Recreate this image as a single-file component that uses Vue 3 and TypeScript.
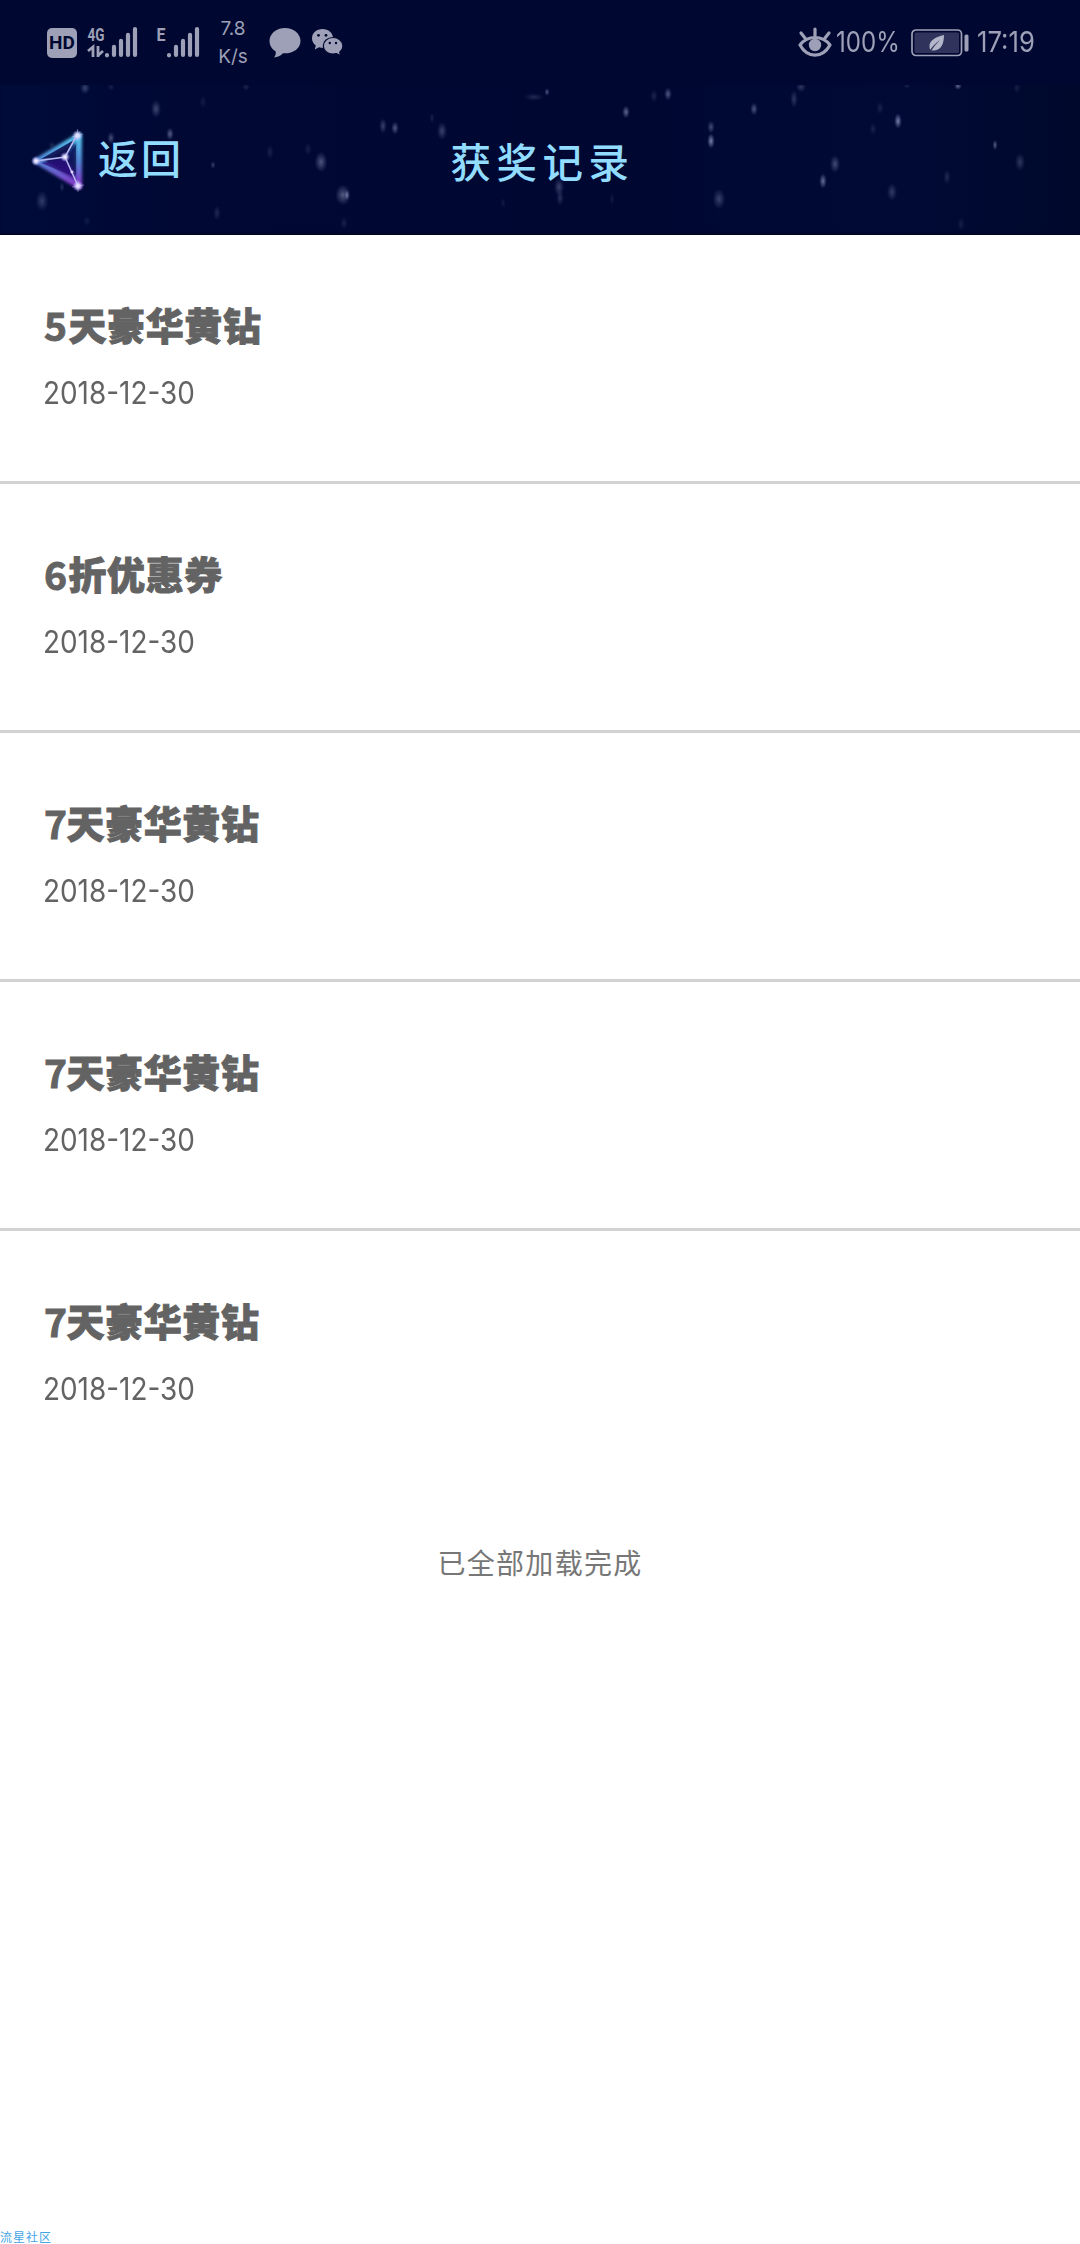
<script setup lang="ts">
interface Prize {
  name: string
  date: string
}

const prizes: Prize[] = [
  { name: '5天豪华黄钻', date: '2018-12-30' },
  { name: '6折优惠券', date: '2018-12-30' },
  { name: '7天豪华黄钻', date: '2018-12-30' },
  { name: '7天豪华黄钻', date: '2018-12-30' },
  { name: '7天豪华黄钻', date: '2018-12-30' },
]

// Star field of the header: x, y, rx, ry, opacity
const stars: number[][] = [
  [85, 88, 4, 5, 0.3], [111, 87, 3, 3, 0.12], [246, 87, 3, 3, 0.15], [156, 109, 4, 7, 0.32],
  [203, 102, 3, 5, 0.1], [170, 134, 3, 5, 0.45], [111, 138, 3, 5, 0.35], [213, 165, 2, 3, 0.3],
  [42, 201, 5, 8, 0.26], [62, 187, 2, 4, 0.2], [321, 162, 5, 8, 0.4], [343, 195, 6, 8, 0.42],
  [347, 195, 2, 4, 0.5], [217, 213, 3, 6, 0.17], [270, 152, 3, 6, 0.13], [308, 149, 3, 5, 0.12],
  [344, 223, 3, 5, 0.13], [87, 221, 3, 4, 0.1], [52, 145, 3, 3, 0.15],
  [383, 126, 3, 6, 0.3], [395, 128, 3, 5, 0.42], [442, 131, 4, 7, 0.3], [432, 118, 2, 4, 0.13],
  [534, 97, 8, 3, 0.17], [547, 92, 2, 3, 0.4], [559, 187, 4, 7, 0.3], [560, 198, 3, 6, 0.22],
  [626, 112, 3, 5, 0.5], [654, 96, 3, 5, 0.15], [668, 94, 3, 5, 0.42], [711, 127, 3, 5, 0.35],
  [711, 141, 3, 6, 0.62], [719, 199, 5, 8, 0.3], [503, 203, 2, 4, 0.1], [612, 199, 2, 5, 0.1],
  [754, 109, 3, 5, 0.4], [794, 99, 3, 7, 0.24], [801, 87, 4, 4, 0.24], [880, 108, 3, 5, 0.13],
  [898, 121, 3, 6, 0.62], [873, 129, 3, 5, 0.12], [835, 164, 4, 7, 0.34], [823, 181, 3, 6, 0.52],
  [892, 192, 4, 7, 0.26], [947, 177, 3, 6, 0.17], [995, 145, 2, 4, 0.45], [1020, 162, 4, 7, 0.24],
  [958, 86, 3, 3, 0.5], [1017, 88, 3, 4, 0.12], [961, 224, 3, 5, 0.12], [907, 86, 3, 2, 0.12],
]
</script>

<template>
  <div class="page">
    <header class="header">
      <svg class="sky" width="1080" height="235" viewBox="0 0 1080 235">
        <defs>
          <radialGradient id="star">
            <stop offset="0" stop-color="#c9cdea" />
            <stop offset="0.45" stop-color="#aab2dc" stop-opacity="0.6" />
            <stop offset="1" stop-color="#8d99d0" stop-opacity="0" />
          </radialGradient>
          <clipPath id="below"><rect y="85" width="1080" height="148" /></clipPath>
        </defs>
        <g clip-path="url(#below)">
          <ellipse
            v-for="(s, i) in stars" :key="i"
            :cx="s[0]" :cy="s[1]" :rx="s[2] * 1.3" :ry="s[3] * 1.3"
            fill="url(#star)" :opacity="s[4]"
          />
        </g>
      </svg>

      <div class="status">
        <div class="hd"><span>HD</span></div>
        <svg class="sig4" width="52" height="34" viewBox="0 0 52 34">
          <text x="0.5" y="14.5" class="net" textLength="17" lengthAdjust="spacingAndGlyphs">4G</text>
          <g stroke="#9da0b6" stroke-width="4.2" stroke-linecap="round">
            <path d="M20 29.2v.1M27 28.9v-8M34 28.9v-14M41 28.9v-20M48 28.9V3" />
          </g>
          <path d="M1 25l5-4v10M11 20v11M11 29.500l5-4.500" fill="none" stroke="#9da0b6" stroke-width="2.8" />
        </svg>
        <svg class="sige" width="45" height="34" viewBox="0 0 45 34">
          <text x="0.5" y="14.5" class="net" textLength="9" lengthAdjust="spacingAndGlyphs">E</text>
          <g stroke="#9da0b6" stroke-width="4.2" stroke-linecap="round">
            <path d="M13 29.2v.1M20 28.9v-8M27 28.9v-14M34 28.9v-20M41 28.9V3" />
          </g>
        </svg>
        <div class="speed"><span>7.8</span><span>K/s</span></div>
        <svg class="bubble" width="32" height="32" viewBox="0 0 32 32">
          <path d="M16 1C7.2 1 .5 6.800.5 14c0 4.600 2.300 8.200 6.200 10.600C7 27.500 6.400 29 5 30.500c3.500-.3 6.600-1.600 9-4.200 9.800.7 17.500-4.600 17.500-12.300C31.500 6.800 24.800 1 16 1z" fill="#9da0b6" />
        </svg>
        <svg class="wechat" width="33" height="30" viewBox="0 0 33 30">
          <path d="M11.500 1C5.500 1 1 5 1 10.300c0 3 1.400 5.400 3.800 7.100L3.700 21.500l4.400-2.300c1.300.4 2.500.5 4 .5 5.600-.3 10-4.200 10-9.400S17.500 1 11.500 1z" fill="#9da0b6" />
          <path d="M22 9.500c-5.500 0-9.700 3.700-9.700 8.300 0 4.700 4.200 8.300 9.700 8.300 1.200 0 2.400-.2 3.500-.5l4.200 2.200-1-3.500c2-1.500 3.200-3.800 3.200-6.400 0-4.700-4.300-8.400-9.900-8.400z" fill="#9da0b6" stroke="#000831" stroke-width="1.200" />
          <g fill="#000831">
            <circle cx="7.500" cy="7.300" r="1.400" /><circle cx="15" cy="7.300" r="1.400" />
            <circle cx="18.800" cy="15" r="1.200" /><circle cx="25" cy="15" r="1.200" />
          </g>
        </svg>
        <div class="grow"></div>
        <svg class="eye" width="34" height="32" viewBox="0 0 34 32">
          <g fill="none" stroke="#9da0b6" stroke-width="3.200" stroke-linecap="round">
            <path d="M2 19C9.500 9 24.500 9 32 19 24.500 32.500 9.500 32.500 2 19z" stroke-linejoin="round" />
            <path d="M17 3v7M3 7l4 5M31 7l-4 5" />
          </g>
          <circle cx="17" cy="19" r="6.200" fill="#9da0b6" />
        </svg>
        <span class="pct">100%</span>
        <svg class="battery" width="59" height="28" viewBox="0 0 59 28">
          <rect x="1" y="1" width="49.500" height="25.500" rx="4" fill="none" stroke="#9da0b6" stroke-width="1.700" />
          <rect x="3.500" y="3.500" width="44.500" height="20.500" rx="1.500" fill="#30345c" />
          <path d="M33 6C25 8 18 11 18.500 18c0 1 .3 2 .8 2.700C22 17 25 14 29 11c-3.500 3.500-6.500 7-8.500 10.500C30 22.500 33 15 33 6z" fill="#b3b5c8" />
          <rect x="53.500" y="5.500" width="4" height="17" rx="1.600" fill="#9da0b6" />
        </svg>
        <span class="clock">17:19</span>
      </div>

      <nav class="nav">
        <a class="back">
          <svg width="62" height="68" viewBox="0 0 62 68">
            <defs>
              <linearGradient id="edge" x1="0" y1="0" x2="0" y2="1">
                <stop offset="0" stop-color="#55c8ef" />
                <stop offset="0.5" stop-color="#5388d8" />
                <stop offset="1" stop-color="#8a35cc" />
              </linearGradient>
              <linearGradient id="body" x1="0" y1="0" x2="0" y2="1">
                <stop offset="0" stop-color="#16579a" />
                <stop offset="0.5" stop-color="#14115e" />
                <stop offset="1" stop-color="#5c18b4" />
              </linearGradient>
              <radialGradient id="spark">
                <stop offset="0" stop-color="#fff" />
                <stop offset="0.4" stop-color="#dcd8ff" stop-opacity="0.85" />
                <stop offset="1" stop-color="#a7a0ff" stop-opacity="0" />
              </radialGradient>
              <filter id="glow" x="-20%" y="-20%" width="140%" height="140%"><feGaussianBlur stdDeviation="1.700" /></filter>
              <filter id="soft"><feGaussianBlur stdDeviation="0.600" /></filter>
            </defs>
            <path d="M8 35L50 10v50z" fill="url(#body)" stroke="url(#edge)" stroke-width="6" stroke-linejoin="round" filter="url(#glow)" />
            <path d="M12 33L45 14 37 30z" fill="#090b4c" opacity="0.850" filter="url(#soft)" />
            <path d="M39 31L47 18v32z" fill="#0c1259" opacity="0.700" filter="url(#soft)" />
            <path d="M12 37L36 33 44 50z" fill="#2a0f7c" opacity="0.700" filter="url(#soft)" />
            <path d="M7 35L36 31 48 9M36 31L49 60" fill="none" stroke="#b9b7f0" stroke-width="1.600" filter="url(#soft)" />
            <circle cx="7" cy="35" r="5" fill="url(#spark)" />
            <circle cx="48.500" cy="9.500" r="5.500" fill="url(#spark)" />
            <circle cx="36" cy="31" r="5" fill="url(#spark)" />
            <circle cx="49" cy="60" r="5.500" fill="url(#spark)" />
            <circle cx="43" cy="46" r="2.200" fill="url(#spark)" />
            <path d="M48.500 3v12M43 11l11-3M49 54v12M43 61l12-2" stroke="#cfd3ff" stroke-width="0.700" opacity="0.600" />
          </svg>
          <span class="back-label">返回</span>
        </a>
        <h1 class="title">获奖记录</h1>
        <div class="side"></div>
      </nav>
    </header>

    <main>
      <ul class="list">
        <li v-for="(p, i) in prizes" :key="i" class="row">
          <h2 class="name"><span class="count" :class="{ wide: p.name[0] !== '7' }">{{ p.name[0] }}</span>{{ p.name.slice(1) }}</h2>
          <p class="date">{{ p.date }}</p>
        </li>
      </ul>
      <p class="done">已全部加载完成</p>
    </main>

    <footer class="mark">流星社区</footer>
  </div>
</template>

<style>
body {
  margin: 0;
  background: #fff;
}
</style>

<style scoped>
.page {
  width: 1080px;
  height: 2244px;
  display: flex;
  flex-direction: column;
  overflow: hidden;
  background: #fff;
  font-family: "Noto Sans CJK SC", sans-serif;
}
.header {
  position: relative;
  height: 235px;
  flex: none;
  background: linear-gradient(90deg, #000b3a 0, #000833 180px, #000832 650px, #000a35 900px, #00092c 1080px);
  box-shadow: inset 0 -2px 2px #010727;
}
.sky {
  position: absolute;
  left: 0;
  top: 0;
}
.status {
  position: relative;
  display: flex;
  align-items: flex-start;
  height: 85px;
  padding: 0 44px 0 47px;
  box-sizing: border-box;
  background: #000831;
  color: #9da0b6;
}
.status > * { flex: none; }
.status > .grow { flex: 1; }
.hd {
  width: 30px;
  height: 30px;
  margin-top: 28px;
  border-radius: 5px;
  background: #9da0b6;
  color: #000831;
  display: flex;
  align-items: center;
  justify-content: center;
  font: 700 19px/30px Roboto, sans-serif;
}
.net { font: 700 19px Roboto, sans-serif; fill: #9da0b6; }
.sig4, .sige { overflow: visible; }
.sig4 { margin: 26px 0 0 10px; }
.sige { margin: 26px 0 0 17px; }
.speed {
  width: 34px;
  margin: 15px 0 0 15px;
  display: flex;
  flex-direction: column;
  align-items: center;
  font-family: Inter, sans-serif;
  font-size: 19px;
  line-height: 28px;
}
.bubble { margin: 27px 0 0 19px; }
.wechat { margin: 28px 0 0 10px; }
.eye { margin-top: 26px; }
.pct,
.clock {
  margin-top: 22px;
  font-family: Inter, sans-serif;
  font-size: 29px;
  line-height: 40px;
  white-space: nowrap;
  transform-origin: left center;
}
.pct {
  width: 64px;
  margin-left: 4px;
  transform: scaleX(0.83);
}
.battery { margin: 29px 0 0 11px; }
.clock {
  width: 59px;
  margin-left: 7px;
  transform: scaleX(0.885);
}
.nav {
  position: relative;
  display: flex;
  height: 150px;
  color: #91dcff;
}
.back {
  width: 360px;
  display: flex;
  align-items: flex-start;
  padding: 41px 0 0 29px;
  box-sizing: border-box;
}
.back-label {
  margin: 1px 0 0 7px;
  font-size: 40px;
  font-weight: 500;
  line-height: 60px;
  letter-spacing: 3px;
}
.title {
  width: 360px;
  margin: 46px 0 0;
  padding-left: 5px;
  box-sizing: border-box;
  text-align: center;
  font-size: 40.500px;
  font-weight: 500;
  line-height: 60px;
  letter-spacing: 5.500px;
}
.side { width: 360px; }
.list {
  margin: 0;
  padding: 0;
  list-style: none;
}
.row {
  height: 249px;
  box-sizing: border-box;
  padding: 61px 44px 0;
  border-bottom: 3px solid #d2d2d2;
  color: #636363;
}
.row:last-child { border-bottom: 0; }
.name {
  display: flex;
  margin: 0;
  font-size: 38px;
  font-weight: 900;
  line-height: 56px;
  letter-spacing: 0.6px;
  -webkit-text-stroke: 0.9px #636363;
}
.count {
  width: 22.500px;
  font-size: 39px;
  font-weight: 700;
  letter-spacing: 0;
}
.count.wide { width: 24.500px; }
.date {
  width: max-content;
  margin: 19px 0 0 -1px;
  font-family: Inter, sans-serif;
  font-size: 31px;
  line-height: 44px;
  transform: scaleX(0.9);
  transform-origin: left center;
}
.done {
  margin: 60px 0 0;
  text-align: center;
  color: #777;
  font-size: 28px;
  line-height: 44px;
  letter-spacing: 1.300px;
}
.mark {
  margin-top: auto;
  height: 18px;
  color: #45a5e6;
  font-size: 12px;
  line-height: 18px;
  letter-spacing: 1px;
  transform: translateY(2px);
}
</style>
